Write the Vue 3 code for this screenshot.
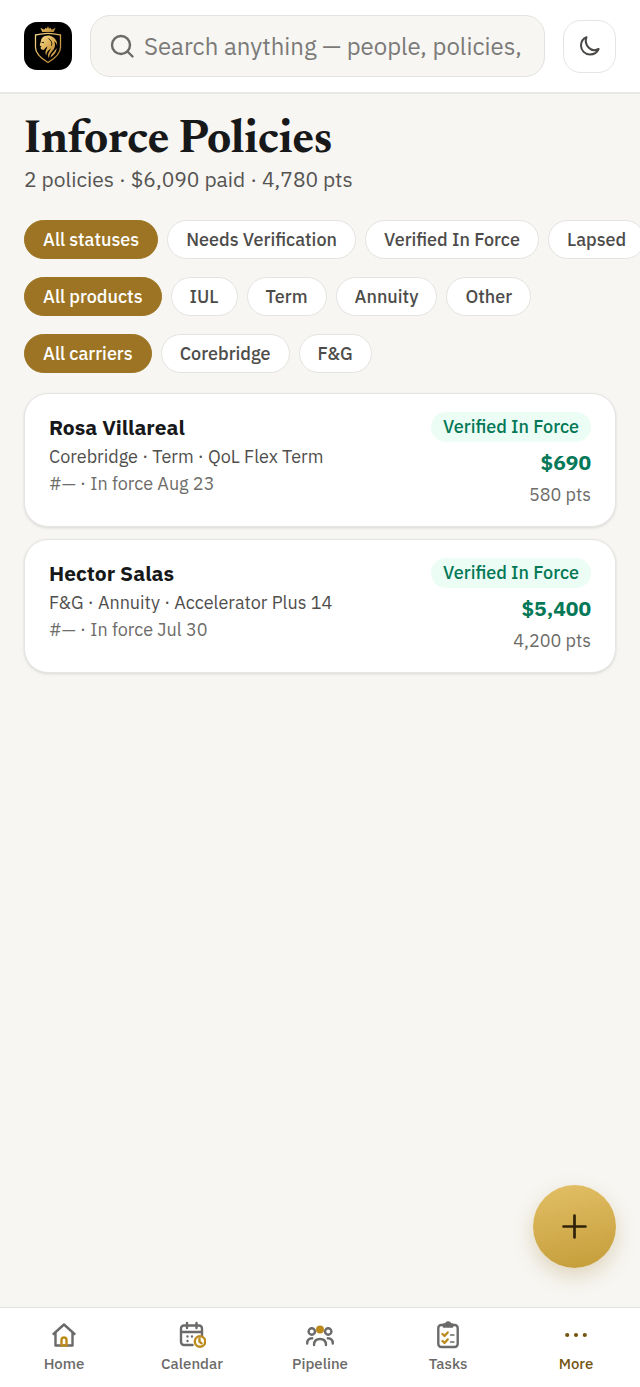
<template>
    <div class="app-shell">
        <header class="top-bar">
            <a href="#home" class="logo" aria-label="Dashboard">
                <svg viewBox="0 0 48 48">
                    <defs>
                        <linearGradient id="crest" x1="0" y1="0" x2="1" y2="1">
                            <stop offset="0" stop-color="#f6d98a" />
                            <stop offset="0.5" stop-color="#d9ac52" />
                            <stop offset="1" stop-color="#a87a2c" />
                        </linearGradient>
                    </defs>
                    <rect width="48" height="48" rx="13" fill="#000" />
                    <g fill="url(#crest)">
                        <path d="M16.500 5.800l3.700 2 1.800-2.300 1 1.600L24 4l1 3.100 1-1.600 1.800 2.300 3.700-2-1.700 4.200H18.200z" />
                        <path d="M17.500 16.800c2.200-3.500 8-4.400 11.700-1.600 3 2 4.600 5.300 3.800 8.600-.4-2-1.200-3.400-2.600-4.200 1.200 3.400.8 6-1.400 8.700-1.800 2.200-3.700 3.800-4 8-2.800-4.200 1-6.600 1.900-10-1.800 2-4.600 3.200-4.600 7.300-2.200-3.500.6-5.900 1-9-1.500.8-2.200 1.800-3.300 3.300l-3-.6-.5-1.700 1-.9-1.800-1.500z" />
                        <path d="M32.500 26c.2 4.200-2.500 6.900-6 9.500.4-4 3.900-5 6-9.500z" />
                    </g>
                    <path d="M17.500 20.300l2.600.4M24.500 16.600c2.800 1.600 3.800 4 3 7.200" fill="none" stroke="#000" stroke-width=".8" />
                    <path d="M24 11.400c-3.800 0-7.500 1-12.500 1.600v12.500c0 6.500 5.400 10.800 12.500 15 7.100-4.200 12.500-8.500 12.500-15V13C31.500 12.400 27.800 11.400 24 11.400z" fill="none" stroke="url(#crest)" stroke-width="1.300" />
                </svg>
            </a>
            <label class="search">
                <svg viewBox="0 0 24 24" class="line-icon">
                    <circle cx="11" cy="11" r="9" />
                    <path d="M17.500 17.500L22.500 22.500" />
                </svg>
                <input v-model="query" type="text" aria-label="Search" placeholder="Search anything — people, policies,">
            </label>
            <button type="button" class="theme-btn" aria-label="Toggle dark mode">
                <svg viewBox="0 0 20 20" class="line-icon">
                    <path d="M6.500 1.200C2.500 3 1 6.500 1 9.500c0 5 4 9 9 9 4 0 7.200-2.200 8.600-5.500-3 1.500-7 1.500-9.800-1.300S5 5 6.500 1.200z" />
                </svg>
            </button>
        </header>

        <main class="content">
            <h1>Inforce Policies</h1>
            <p class="summary">2 policies · $6,090 paid · 4,780 pts</p>

            <div class="filters">
                <div v-for="group in filters" :key="group.name" class="filter-row" role="group" :aria-label="group.name">
                    <button v-for="option in group.options" :key="option" type="button" class="chip"
                        :class="{ active: selected[group.name] === option }"
                        :aria-pressed="selected[group.name] === option"
                        @click="selected[group.name] = option">{{ option }}</button>
                </div>
            </div>

            <div class="policy-list">
                <article v-for="policy in policies" :key="policy.name" class="policy-card">
                    <div class="policy-info">
                        <h2>{{ policy.name }}</h2>
                        <p>{{ policy.product }}</p>
                        <p class="muted">{{ policy.meta }}</p>
                    </div>
                    <div class="policy-numbers">
                        <span class="badge">Verified In Force</span>
                        <strong>{{ policy.amount }}</strong>
                        <span class="muted">{{ policy.points }} pts</span>
                    </div>
                </article>
            </div>
        </main>

        <button type="button" class="add-btn" aria-label="Add policy">
            <svg viewBox="0 0 24 24" class="line-icon">
                <path d="M12 1.500v21M1.500 12h21" />
            </svg>
        </button>

        <nav class="tab-bar">
            <a href="#home">
                <svg viewBox="0 0 28 28" class="line-icon">
                    <path d="M3.500 13L14 3.500 24.500 13M5.500 11.500V24.500h17V11.500" />
                    <path class="gold" d="M11.500 24.500v-5.500a2.500 2.500 0 0 1 5 0v5.500z" />
                </svg>
                Home
            </a>
            <a href="#calendar">
                <svg viewBox="0 0 28 28" class="line-icon">
                    <path d="M14.500 24H6a3 3 0 0 1-3-3V7.500a3 3 0 0 1 3-3h15a3 3 0 0 1 3 3v7M3 11h21M9 2v5M18.500 2v5" />
                    <path d="M9.500 15.500v.1M14 15.500v.1M9.500 20v.1" />
                    <g class="gold">
                        <circle cx="22" cy="20.500" r="5.200" />
                        <path d="M21.500 17.800v3l2 1.500" />
                    </g>
                </svg>
                Calendar
            </a>
            <a href="#pipeline">
                <svg viewBox="0 0 28 28" class="line-icon">
                    <circle cx="5.800" cy="10.500" r="3.200" />
                    <circle cx="22.200" cy="10.500" r="3.200" />
                    <circle class="gold-fill" cx="14" cy="8.500" r="4" />
                    <path d="M1.200 22.500c0-3.500 1.600-5.300 5-5.300M26.800 22.500c0-3.500-1.600-5.300-5-5.300M8 24c0-4 2.300-6 6-6s6 2 6 6" />
                </svg>
                Pipeline
            </a>
            <a href="#tasks">
                <svg viewBox="0 0 28 28" class="line-icon">
                    <rect x="4.300" y="4" width="19.400" height="22" rx="3" />
                    <path d="M9.800 5.500V3.500h2.200a2 2 0 0 1 4 0h2.200v2z" fill="currentColor" />
                    <path class="gold" d="M8.500 13l2 2 3.200-3.500M8.500 20l2 2 3.200-3.500" />
                    <path class="thin" d="M16.500 14h3.500M16.500 21h3.500" />
                </svg>
                Tasks
            </a>
            <a href="#more" class="current" aria-current="page">
                <svg viewBox="0 0 28 28" fill="currentColor">
                    <circle cx="5.200" cy="14" r="2.100" />
                    <circle cx="14" cy="14" r="2.100" />
                    <circle cx="22.800" cy="14" r="2.100" />
                </svg>
                More
            </a>
        </nav>
    </div>
</template>

<script setup>
import { ref } from 'vue';

const query = ref('');

const filters = [
    { name: 'status', options: ['All statuses', 'Needs Verification', 'Verified In Force', 'Lapsed'] },
    { name: 'product', options: ['All products', 'IUL', 'Term', 'Annuity', 'Other'] },
    { name: 'carrier', options: ['All carriers', 'Corebridge', 'F&G'] },
];

const selected = ref({
    status: 'All statuses',
    product: 'All products',
    carrier: 'All carriers',
});

const policies = [
    { name: 'Rosa Villareal', product: 'Corebridge · Term · QoL Flex Term', meta: '#— · In force Aug 23', amount: '$690', points: '580' },
    { name: 'Hector Salas', product: 'F&G · Annuity · Accelerator Plus 14', meta: '#— · In force Jul 30', amount: '$5,400', points: '4,200' },
];
</script>

<style>
body {
    margin: 0;
    background: #f7f6f2;
}
</style>

<style scoped>
.app-shell {
    display: flex;
    flex-direction: column;
    min-height: 100vh;
    background: #f7f6f2;
    color: #17181a;
    font-family: "IBM Plex Sans", Roboto, "Liberation Sans", sans-serif;
}

button,
input {
    font-family: inherit;
}

h1,
h2,
p {
    margin: 0;
}

.line-icon {
    fill: none;
    stroke: currentColor;
    stroke-width: 2.4;
    stroke-linecap: round;
    stroke-linejoin: round;
}

.top-bar {
    display: flex;
    align-items: center;
    gap: 18px;
    padding: 15px 24px;
    background: #fff;
    border-bottom: 2px solid #e8e8e7;
}

.logo,
.logo svg {
    display: block;
    width: 48px;
    height: 48px;
}

.search {
    flex: 1;
    min-width: 0;
    display: flex;
    align-items: center;
    gap: 10px;
    box-sizing: border-box;
    height: 62px;
    padding: 0 19px;
    border: 1px solid #e2e2e0;
    border-radius: 20px;
    background: #f7f6f2;
    color: #6b6a67;
}

.search svg {
    flex: none;
    width: 24px;
    height: 24px;
}

.search input {
    flex: 1;
    min-width: 0;
    padding: 0;
    border: 0;
    outline: 0;
    background: none;
    font-size: 24px;
    color: #17181a;
}

.search input::placeholder {
    color: #7b7a78;
    opacity: 1;
}

.theme-btn {
    display: grid;
    place-items: center;
    width: 53px;
    height: 53px;
    padding: 0;
    border: 1px solid #e5e5e4;
    border-radius: 18px;
    background: #fff;
    color: #484745;
}

.theme-btn svg {
    width: 20px;
    height: 20px;
    stroke-width: 2;
}

.content {
    flex: 1;
    padding: 22px 24px;
}

h1 {
    font-family: Newsreader, "Source Serif 4", "Liberation Serif", serif;
    font-size: 46px;
    line-height: 50px;
    font-weight: 700;
}

.summary {
    font-size: 21px;
    line-height: 26px;
    color: #555452;
}

.filters {
    display: grid;
    gap: 18px;
    margin: 28px -24px 20px 0;
}

.filter-row {
    display: flex;
    gap: 9px;
    min-width: 0;
    overflow-x: auto;
    scrollbar-width: none;
}

.chip {
    flex: none;
    box-sizing: border-box;
    height: 39px;
    padding: 0 18px;
    border: 1px solid #e3e3e2;
    border-radius: 20px;
    background: #fff;
    color: #4d4c4a;
    font-size: 18px;
    font-weight: 500;
}

.chip.active {
    border-color: #9c7423;
    background: #9c7423;
    color: #fff;
}

.policy-list {
    display: grid;
    gap: 12px;
}

.policy-card {
    display: flex;
    justify-content: space-between;
    gap: 16px;
    padding: 18px 24px;
    border: 1px solid #e5e5e4;
    border-radius: 24px;
    background: #fff;
    box-shadow: 0 1px 3px rgba(0, 0, 0, .12);
}

.policy-info p {
    font-size: 18px;
    line-height: 27px;
    color: #4f4e4c;
}

h2 {
    margin-bottom: 1px;
    font-size: 21px;
    line-height: 30px;
    font-weight: 700;
}

.policy-numbers {
    display: flex;
    flex-direction: column;
    align-items: flex-end;
    gap: 4px;
    font-size: 18px;
    line-height: 26px;
}

.policy-info .muted,
.muted {
    color: #6d6c69;
}

.badge {
    padding: 0 12px;
    border-radius: 15px;
    background: #ecfdf5;
    color: #047857;
    font-weight: 500;
    line-height: 30px;
}

.policy-numbers strong {
    color: #047857;
    font-size: 21px;
    line-height: 32px;
}

.add-btn {
    position: fixed;
    right: 24px;
    bottom: 119px;
    display: grid;
    place-items: center;
    width: 83px;
    height: 83px;
    padding: 0;
    border: 0;
    border-radius: 50%;
    background: linear-gradient(170deg, #e3bf66, #c49d39);
    color: #30230a;
    box-shadow: 0 8px 20px rgba(156, 116, 35, .25);
}

.add-btn svg {
    width: 25px;
    height: 25px;
    stroke-width: 2.6;
}

.tab-bar {
    position: sticky;
    bottom: 0;
    display: grid;
    grid-template-columns: repeat(5, 1fr);
    box-sizing: border-box;
    height: 80px;
    padding-top: 13px;
    border-top: 1px solid #e2e2e1;
    background: #fff;
}

.tab-bar a {
    display: flex;
    flex-direction: column;
    align-items: center;
    gap: 4px;
    color: #6b6a68;
    font-size: 15px;
    line-height: 22px;
    font-weight: 500;
    text-decoration: none;
}

.tab-bar svg {
    width: 28px;
    height: 28px;
}

.tab-bar .gold {
    stroke: #bd8b1c;
}

.tab-bar .gold-fill {
    fill: #bd8b1c;
    stroke: none;
}

.tab-bar .thin {
    stroke-width: 1.4;
}

.tab-bar .current {
    color: #755511;
}
</style>
